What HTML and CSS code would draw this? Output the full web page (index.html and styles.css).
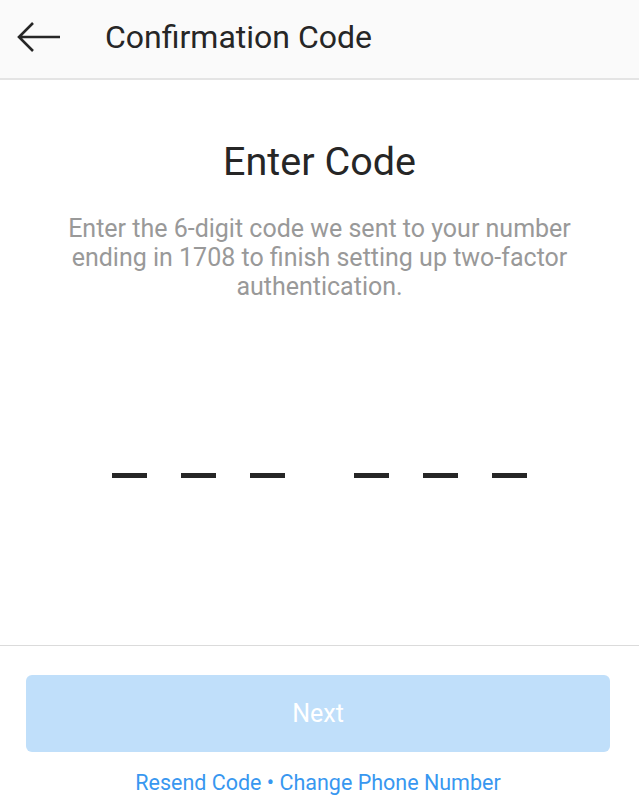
FILE: index.html
```html
<!DOCTYPE html>
<html>
<head>
<meta charset="utf-8">
<link rel="stylesheet" href="styles.css">
</head>
<body>
<div class="app">
  <header class="topbar">
    <svg class="back" width="44" height="32" viewBox="0 0 44 32">
      <path d="M43 16H3M16 2L2 16l14 14" fill="none" stroke="#262626" stroke-width="2.6" stroke-linecap="butt" stroke-linejoin="miter"/>
    </svg>
    <h1 class="topbar-title">Confirmation Code</h1>
  </header>
  <main class="content">
    <h2 class="heading">Enter Code</h2>
    <p class="desc">Enter the 6-digit code we sent to your number ending in 1708 to finish setting up two-factor authentication.</p>
    <div class="code">
      <div class="group"><span class="dash"></span><span class="dash"></span><span class="dash"></span></div>
      <div class="group"><span class="dash"></span><span class="dash"></span><span class="dash"></span></div>
    </div>
  </main>
  <footer class="footer">
    <button class="next">Next</button>
    <div class="links"><span>Resend Code</span> • <span>Change Phone Number</span></div>
  </footer>
</div>
</body>
</html>
```
FILE: styles.css
```css
* { box-sizing: border-box; }
html, body { margin: 0; padding: 0; background: #fff; }
body { font-family: Roboto, "Noto Sans", sans-serif; }
.app { width: 639px; height: 800px; display: flex; flex-direction: column; overflow: hidden; }
.topbar {
  height: 80px;
  background: #fafafa;
  border-bottom: 2px solid #e4e4e4;
  display: flex;
  align-items: center;
  padding-left: 17px;
  flex-shrink: 0;
}
.back { display: block; margin-top: -4px; }
.topbar-title {
  margin: -4px 0 0 44px;
  font-size: 32px;
  font-weight: 400;
  color: #262626;
}
.content {
  flex: 1;
  display: flex;
  flex-direction: column;
  align-items: center;
  padding-top: 60px;
}
.heading {
  margin: 0;
  font-size: 39.5px;
  font-weight: 400;
  color: #262626;
  line-height: 44px;
}
.desc {
  margin: 30px 0 0;
  width: 540px;
  text-align: center;
  font-size: 25px;
  line-height: 29px;
  color: #999;
}
.code {
  margin-top: 172px;
  display: flex;
  gap: 69px;
}
.group { display: flex; gap: 34px; }
.dash { width: 35px; height: 5px; background: #262626; display: block; }
.footer {
  flex-shrink: 0;
  height: 155px;
  border-top: 1px solid #dbdbdb;
  padding: 29px 29px 0 26px;
  display: flex;
  flex-direction: column;
}
.next {
  height: 77px;
  width: 584px;
  border: none;
  border-radius: 6px;
  background: #c0dffa;
  color: #fff;
  font-family: Roboto, sans-serif;
  font-size: 25px;
  padding: 0;
}
.links {
  margin-top: 17px;
  text-align: center;
  color: #3897f0;
  font-size: 21.5px;
  line-height: 28px;
}
```
